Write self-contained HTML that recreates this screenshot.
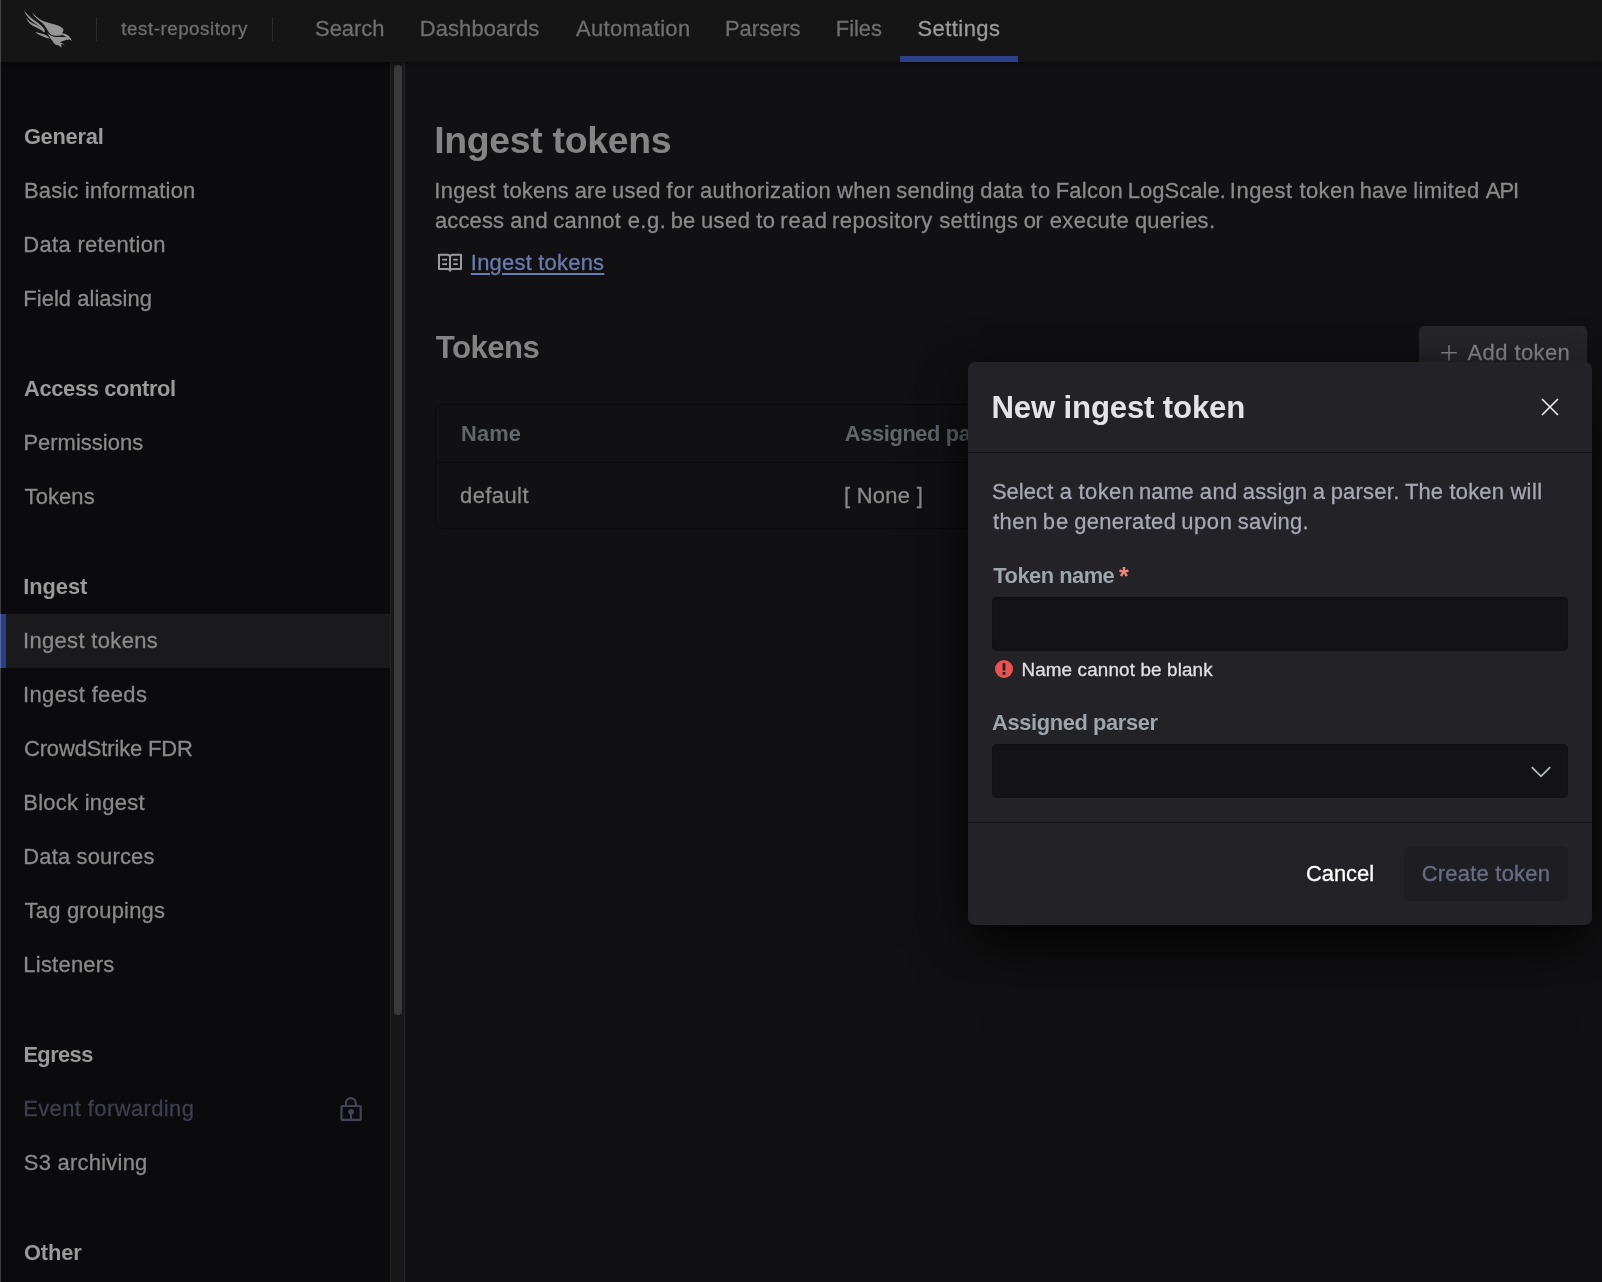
<!DOCTYPE html>
<html lang="en">
<head>
<meta charset="utf-8">
<title>Ingest tokens - test-repository</title>
<style>
html,body{margin:0;padding:0;background:#111113;}
body{width:1602px;height:1282px;overflow:hidden;font-family:"Liberation Sans",Arial,sans-serif;}
#app{position:relative;width:1602px;height:1282px;overflow:hidden;background:#111113;}
.t{position:absolute;white-space:nowrap;line-height:1;-webkit-text-stroke:0.3px currentColor;}
.t.b{-webkit-text-stroke:0;}
#app{will-change:transform;}
.abs{position:absolute;}
a{color:inherit;}
</style>
</head>
<body>
<div id="app">

<!-- sidebar -->
<aside>
  <div class="abs" style="left:0;top:62px;width:390px;height:1220px;background:#0b0b0d;"></div>
  <div class="abs" style="left:0;top:613.5px;width:390px;height:54px;background:#1a1a1c;"></div>
  <div class="abs" style="left:0;top:613.5px;width:6px;height:54px;background:#2b3f86;"></div>
  <nav>
    <span id="s0" class="t b" style="left:23.90px;top:125.51px;font-size:21.84px;font-weight:700;color:#9a9a9a;letter-spacing:-0.245px;">General</span><span id="s1" class="t" style="left:23.95px;top:180.24px;font-size:21.95px;font-weight:400;color:#8a8a8a;letter-spacing:0.192px;">Basic information</span><span id="s2" class="t" style="left:23.33px;top:234.24px;font-size:21.95px;font-weight:400;color:#8a8a8a;letter-spacing:0.326px;">Data retention</span><span id="s3" class="t" style="left:23.33px;top:288.24px;font-size:21.95px;font-weight:400;color:#8a8a8a;letter-spacing:0.044px;">Field aliasing</span>
    <span id="s4" class="t b" style="left:24.09px;top:377.51px;font-size:21.84px;font-weight:700;color:#9a9a9a;letter-spacing:-0.345px;">Access control</span><span id="s5" class="t" style="left:23.40px;top:432.25px;font-size:21.95px;font-weight:400;color:#8a8a8a;letter-spacing:0.032px;">Permissions</span><span id="s6" class="t" style="left:24.60px;top:486.25px;font-size:21.95px;font-weight:400;color:#8a8a8a;letter-spacing:0.105px;">Tokens</span>
    <span id="s7" class="t b" style="left:23.37px;top:575.51px;font-size:21.84px;font-weight:700;color:#9a9a9a;letter-spacing:-0.083px;">Ingest</span><span id="s8" class="t" style="left:23.00px;top:630.24px;font-size:21.95px;font-weight:400;color:#8a8a8a;letter-spacing:0.354px;">Ingest tokens</span><span id="s9" class="t" style="left:23.01px;top:684.24px;font-size:21.95px;font-weight:400;color:#8a8a8a;letter-spacing:0.396px;">Ingest feeds</span><span id="s10" class="t" style="left:23.95px;top:738.24px;font-size:21.95px;font-weight:400;color:#8a8a8a;letter-spacing:-0.123px;">CrowdStrike FDR</span><span id="s11" class="t" style="left:23.30px;top:792.24px;font-size:21.95px;font-weight:400;color:#8a8a8a;letter-spacing:0.268px;">Block ingest</span><span id="s12" class="t" style="left:23.33px;top:846.24px;font-size:21.95px;font-weight:400;color:#8a8a8a;letter-spacing:0.170px;">Data sources</span><span id="s13" class="t" style="left:24.58px;top:900.25px;font-size:21.95px;font-weight:400;color:#8a8a8a;letter-spacing:0.213px;">Tag groupings</span><span id="s14" class="t" style="left:23.33px;top:954.24px;font-size:21.95px;font-weight:400;color:#8a8a8a;letter-spacing:0.248px;">Listeners</span>
    <span id="s15" class="t b" style="left:23.40px;top:1043.51px;font-size:21.84px;font-weight:700;color:#9a9a9a;letter-spacing:-0.576px;">Egress</span><span id="s16" class="t" style="left:23.14px;top:1098.28px;font-size:21.95px;font-weight:400;color:#3e3e4d;letter-spacing:0.413px;">Event forwarding</span><span id="s17" class="t" style="left:23.81px;top:1152.25px;font-size:21.95px;font-weight:400;color:#8a8a8a;letter-spacing:0.252px;">S3 archiving</span>
    <span id="s18" class="t b" style="left:23.90px;top:1241.51px;font-size:21.84px;font-weight:700;color:#9a9a9a;letter-spacing:-0.094px;">Other</span>
  </nav>
  <svg class="abs" style="left:338px;top:1094px;" width="26" height="30" viewBox="338 1094 26 30" fill="none" stroke="#434458" stroke-width="2.2" stroke-linejoin="round">
    <rect x="341.5" y="1106" width="19.2" height="13.9" rx="0.8"/>
    <path d="M346 1106v-3a4.900 4.900 0 0 1 9.800 0v3"/>
    <circle cx="351.100" cy="1111.800" r="2.900" fill="#434458" stroke="none"/>
    <path d="M351.100 1112v7.500" stroke-width="2"/>
  </svg>
  <!-- scrollbar -->
  <div class="abs" style="left:390px;top:62px;width:15px;height:1220px;background:#181818;box-sizing:border-box;border-left:1px solid #222;border-right:1px solid #262626;"></div>
  <div class="abs" style="left:394px;top:65px;width:8px;height:950px;border-radius:4px;background:#3a3a3a;"></div>
</aside>

<!-- main -->
<main>
  <h1 style="margin:0;font-size:inherit;"><span id="h1" class="t b" style="left:434.14px;top:122.31px;font-size:37.44px;font-weight:700;color:#848484;letter-spacing:-0.312px;">Ingest tokens</span></h1>
  <p style="margin:0;"><span id="p1_0" class="t" style="left:434.33px;top:180.24px;font-size:21.95px;font-weight:400;color:#8a8a8a;letter-spacing:0.286px;white-space:pre;">Ingest</span> <span id="p1_1" class="t" style="left:503.09px;top:180.24px;font-size:21.95px;font-weight:400;color:#8a8a8a;letter-spacing:0.223px;white-space:pre;">tokens</span> <span id="p1_2" class="t" style="left:574.65px;top:180.25px;font-size:21.95px;font-weight:400;color:#8a8a8a;letter-spacing:0.208px;white-space:pre;">are</span> <span id="p1_3" class="t" style="left:612.12px;top:180.24px;font-size:21.95px;font-weight:400;color:#8a8a8a;letter-spacing:0.245px;white-space:pre;">used</span> <span id="p1_4" class="t" style="left:666.61px;top:180.25px;font-size:21.95px;font-weight:400;color:#8a8a8a;letter-spacing:0.738px;white-space:pre;">for</span> <span id="p1_5" class="t" style="left:699.97px;top:180.24px;font-size:21.95px;font-weight:400;color:#8a8a8a;letter-spacing:0.431px;white-space:pre;">authorization</span> <span id="p1_6" class="t" style="left:837.03px;top:180.24px;font-size:21.95px;font-weight:400;color:#8a8a8a;letter-spacing:0.374px;white-space:pre;">when</span> <span id="p1_7" class="t" style="left:896.20px;top:180.24px;font-size:21.95px;font-weight:400;color:#8a8a8a;letter-spacing:0.250px;white-space:pre;">sending</span> <span id="p1_8" class="t" style="left:980.13px;top:180.24px;font-size:21.95px;font-weight:400;color:#8a8a8a;letter-spacing:0.160px;white-space:pre;">data</span> <span id="p1_9" class="t" style="left:1030.84px;top:180.25px;font-size:21.95px;font-weight:400;color:#8a8a8a;letter-spacing:1.091px;white-space:pre;">to</span> <span id="p1_10" class="t" style="left:1055.68px;top:180.25px;font-size:21.95px;font-weight:400;color:#8a8a8a;letter-spacing:0.256px;white-space:pre;">Falcon</span> <span id="p1_11" class="t" style="left:1127.68px;top:180.25px;font-size:21.95px;font-weight:400;color:#8a8a8a;letter-spacing:0.065px;white-space:pre;">LogScale.</span> <span id="p1_12" class="t" style="left:1229.87px;top:180.25px;font-size:21.95px;font-weight:400;color:#8a8a8a;letter-spacing:0.503px;white-space:pre;">Ingest</span> <span id="p1_13" class="t" style="left:1299.52px;top:180.25px;font-size:21.95px;font-weight:400;color:#8a8a8a;letter-spacing:0.368px;white-space:pre;">token</span> <span id="p1_14" class="t" style="left:1359.70px;top:180.25px;font-size:21.95px;font-weight:400;color:#8a8a8a;letter-spacing:0.096px;white-space:pre;">have</span> <span id="p1_15" class="t" style="left:1413.17px;top:180.24px;font-size:21.95px;font-weight:400;color:#8a8a8a;letter-spacing:0.422px;white-space:pre;">limited</span> <span id="p1_16" class="t" style="left:1485.65px;top:180.25px;font-size:21.95px;font-weight:400;color:#8a8a8a;letter-spacing:-0.896px;white-space:pre;">API</span><span id="p2_0" class="t" style="left:434.97px;top:210.24px;font-size:21.95px;font-weight:400;color:#8a8a8a;letter-spacing:0.151px;white-space:pre;">access</span> <span id="p2_1" class="t" style="left:510.32px;top:210.24px;font-size:21.95px;font-weight:400;color:#8a8a8a;letter-spacing:0.340px;white-space:pre;">and</span> <span id="p2_2" class="t" style="left:553.31px;top:210.24px;font-size:21.95px;font-weight:400;color:#8a8a8a;letter-spacing:0.346px;white-space:pre;">cannot</span> <span id="p2_3" class="t" style="left:627.63px;top:210.25px;font-size:21.95px;font-weight:400;color:#8a8a8a;letter-spacing:0.537px;white-space:pre;">e.g.</span> <span id="p2_4" class="t" style="left:670.64px;top:210.25px;font-size:21.95px;font-weight:400;color:#8a8a8a;letter-spacing:0.214px;white-space:pre;">be</span> <span id="p2_5" class="t" style="left:700.89px;top:210.24px;font-size:21.95px;font-weight:400;color:#8a8a8a;letter-spacing:0.482px;white-space:pre;">used</span> <span id="p2_6" class="t" style="left:756.28px;top:210.24px;font-size:21.95px;font-weight:400;color:#8a8a8a;letter-spacing:0.361px;white-space:pre;">to</span> <span id="p2_7" class="t" style="left:780.32px;top:210.24px;font-size:21.95px;font-weight:400;color:#8a8a8a;letter-spacing:0.874px;white-space:pre;">read</span> <span id="p2_8" class="t" style="left:832.06px;top:210.24px;font-size:21.95px;font-weight:400;color:#8a8a8a;letter-spacing:0.416px;white-space:pre;">repository</span> <span id="p2_9" class="t" style="left:939.21px;top:210.24px;font-size:21.95px;font-weight:400;color:#8a8a8a;letter-spacing:0.450px;white-space:pre;">settings</span> <span id="p2_10" class="t" style="left:1023.80px;top:210.25px;font-size:21.95px;font-weight:400;color:#8a8a8a;letter-spacing:-0.433px;white-space:pre;">or</span> <span id="p2_11" class="t" style="left:1049.77px;top:210.25px;font-size:21.95px;font-weight:400;color:#8a8a8a;letter-spacing:0.359px;white-space:pre;">execute</span> <span id="p2_12" class="t" style="left:1134.89px;top:210.24px;font-size:21.95px;font-weight:400;color:#8a8a8a;letter-spacing:0.294px;white-space:pre;">queries.</span></p>
  <svg class="abs" style="left:436px;top:252px;" width="28" height="22" viewBox="436 252 28 22" fill="none" stroke="#9c9c9c" stroke-width="2" stroke-linejoin="round">
    <path d="M439 254.800h8.200c1.500 0 2.800 0.900 2.800 2.200c0-1.300 1.300-2.200 2.800-2.200h8.200v14.200h-8.200c-1.500 0-2.800 0.600-2.800 1.800c0-1.200-1.300-1.800-2.800-1.800h-8.200z"/>
    <path d="M450 257v13.500"/>
    <path d="M442.200 259.700h4.800M442.200 264.200h4.800M453.200 259.700h4.600M453.200 264.200h4.600" stroke-width="1.800" stroke-linejoin="miter"/>
  </svg>
  <a><span id="lnk" class="t" style="left:470.84px;top:252.25px;font-size:21.95px;font-weight:400;color:#6c7ab0;letter-spacing:0.228px;text-decoration:underline;text-underline-offset:2.5px;text-decoration-thickness:2px;">Ingest tokens</span></a>
  <h2 style="margin:0;font-size:inherit;"><span id="h2" class="t b" style="left:435.85px;top:331.59px;font-size:31.20px;font-weight:700;color:#848484;letter-spacing:-0.559px;">Tokens</span></h2>
  <div class="abs" style="left:1419px;top:326px;width:168px;height:54px;border-radius:5px;background:#27272c;"></div>
  <svg class="abs" style="left:1440px;top:344px;" width="18" height="18" viewBox="1440 344 18 18" fill="none" stroke="#8c8c8c" stroke-width="1.5"><path d="M1449 345.2v15.300M1441.200 352.800h15.600"/></svg>
  <span id="add" class="t" style="left:1467.54px;top:342.42px;font-size:21.95px;font-weight:400;color:#8c8c8c;letter-spacing:0.434px;">Add token</span>
  <div class="abs" style="left:435px;top:404px;width:1152px;height:125px;box-sizing:border-box;border:1px solid #0a0a0c;border-radius:7px;"></div>
  <div class="abs" style="left:436px;top:462px;width:1150px;height:1px;background:#0a0a0c;"></div>
  <span id="th1" class="t b" style="left:461.11px;top:422.51px;font-size:21.84px;font-weight:700;color:#62666a;letter-spacing:0.099px;">Name</span><span id="th2" class="t b" style="left:844.80px;top:422.51px;font-size:21.84px;font-weight:700;color:#62666a;letter-spacing:-0.370px;">Assigned parser</span><span id="td1" class="t" style="left:460.07px;top:485.24px;font-size:21.95px;font-weight:400;color:#8a8a8a;letter-spacing:0.430px;">default</span><span id="td2" class="t" style="left:843.96px;top:485.24px;font-size:21.95px;font-weight:400;color:#8a8a8a;letter-spacing:0.281px;">[ None ]</span>
</main>

<!-- header -->
<header>
  <div class="abs" style="left:0;top:0;width:1602px;height:62px;background:#151515;box-shadow:0 1px 4px rgba(0,0,0,.6);"></div>
  <svg class="abs" style="left:20px;top:5px;" width="60" height="48" viewBox="20 5 60 48" fill="#969696">
    <path d="M23.9 10.2C27 14.5 31 18 35 20.8C39 23.6 42.5 26 44.9 30.3L43.9 31C41.2 27.3 37.7 25.1 33.8 22.5C29.7 19.6 26.2 15.9 23.9 10.2Z"/>
    <path d="M26 17.7C28.5 21 32 23 36.5 25C40 26.7 43 28.4 45 31.6L44 32.4C41.8 29.9 38.8 28.7 35.3 27C31.2 25 27.7 22.4 26 17.7Z"/>
    <path d="M32 12.3C34.5 15.5 38 18.6 42.5 20.7C47 22.6 53 23.6 58 25.5C61 26.7 63 28 63.4 29.5C63.6 30.8 62.8 32 62.3 33.2L62.3 34.9C59 35.7 56 36.1 53.7 35.6C51 35 49 32.6 47.7 30.4C46.200 27.2 44 24.2 41 21.9C37.500 19.4 34.4 17 32 12.3Z"/>
    <path d="M62.3 33C64 33.5 65.8 34 67 34.7C68.6 35.6 69.6 36.8 70.4 38C71 39 71.6 40 71.9 41.1C70.8 40.2 70 39.600 68.9 39.200L68.300 39.900C67.600 39.600 67 39.600 66.400 39.800C64 40.600 61.600 41.600 59.800 42.400C61.800 42.600 63.800 43.600 64.800 45.600C63.600 44.600 62.400 44.100 61 44.100C61.600 45.200 61.700 46.400 61.300 47.700C60.600 46.600 59.800 45.800 58.800 45.400C57.400 45.200 56 44.800 55.400 44.500C53.600 42.800 52.200 40.400 50.600 38.400C49.400 36.800 48.200 34.800 47.200 32.600C49 34.6 51.4 36.3 54 36.8C58 37.3 62 36.7 66.6 37.3C65.400 36.200 63.800 35.400 62.300 34.900Z"/>
    <path d="M35 32.100C38 32.600 41 33.300 44 34.200C46.400 35 48.400 36.400 49.800 38.500C46 37.800 42 36.200 38.600 34.400C37.200 33.700 36 33 35 32.100Z"/>
  </svg>
  <div class="abs" style="left:96px;top:17px;width:1px;height:24px;background:#2c2c2c;"></div>
  <div class="abs" style="left:272px;top:17px;width:1px;height:24px;background:#2c2c2c;"></div>
  <span id="repo" class="t" style="left:121.34px;top:19.91px;font-size:18.81px;font-weight:400;color:#6e6e6e;letter-spacing:0.506px;">test-repository</span>
  <nav><span id="n1" class="t" style="left:315.09px;top:18.25px;font-size:21.95px;font-weight:400;color:#6e6e6e;letter-spacing:-0.042px;">Search</span><span id="n2" class="t" style="left:419.65px;top:18.25px;font-size:21.95px;font-weight:400;color:#6e6e6e;letter-spacing:0.142px;">Dashboards</span><span id="n3" class="t" style="left:575.93px;top:18.25px;font-size:21.95px;font-weight:400;color:#6e6e6e;letter-spacing:0.360px;">Automation</span><span id="n4" class="t" style="left:724.92px;top:18.25px;font-size:21.95px;font-weight:400;color:#6e6e6e;letter-spacing:0.009px;">Parsers</span><span id="n5" class="t" style="left:835.87px;top:18.25px;font-size:21.95px;font-weight:400;color:#6e6e6e;letter-spacing:-0.048px;">Files</span><span id="n6" class="t" style="left:917.49px;top:18.24px;font-size:21.95px;font-weight:400;color:#9b9b9b;letter-spacing:0.454px;">Settings</span></nav>
  <div class="abs" style="left:900px;top:56px;width:118px;height:6px;background:#2a3f87;"></div>
</header>
<div class="abs" style="left:0;top:0;width:1px;height:1282px;background:rgba(255,255,255,.21);"></div>

<!-- modal -->
<div role="dialog">
  <div class="abs" style="left:968px;top:362px;width:624px;height:563px;border-radius:7px;background:#222227;box-shadow:0 34px 56px -10px rgba(0,0,0,.68),0 6px 46px 4px rgba(0,0,0,.42);"></div>
  <h2 style="margin:0;font-size:inherit;"><span id="mt" class="t b" style="left:991.49px;top:391.59px;font-size:31.20px;font-weight:700;color:#e4e4e7;letter-spacing:-0.180px;">New ingest token</span></h2>
  <svg class="abs" style="left:1540px;top:397px;" width="20" height="20" viewBox="0 0 20 20" fill="none" stroke="#f4f4f6" stroke-width="1.6"><path d="M2 2l16 16M18 2L2 18"/></svg>
  <div class="abs" style="left:968px;top:452px;width:624px;height:1px;background:#111113;"></div>
  <p style="margin:0;"><span id="mb1_0" class="t" style="left:991.89px;top:481.23px;font-size:21.95px;font-weight:400;color:#a8a8b3;letter-spacing:0.078px;white-space:pre;">Select</span> <span id="mb1_1" class="t" style="left:1059.83px;top:481.23px;font-size:21.95px;font-weight:400;color:#a8a8b3;letter-spacing:0.210px;white-space:pre;">a</span> <span id="mb1_2" class="t" style="left:1078.59px;top:481.23px;font-size:21.95px;font-weight:400;color:#a8a8b3;letter-spacing:0.411px;white-space:pre;">token</span> <span id="mb1_3" class="t" style="left:1139.07px;top:481.23px;font-size:21.95px;font-weight:400;color:#a8a8b3;letter-spacing:-0.042px;white-space:pre;">name</span> <span id="mb1_4" class="t" style="left:1199.87px;top:481.23px;font-size:21.95px;font-weight:400;color:#a8a8b3;letter-spacing:0.345px;white-space:pre;">and</span> <span id="mb1_5" class="t" style="left:1242.87px;top:481.23px;font-size:21.95px;font-weight:400;color:#a8a8b3;letter-spacing:0.153px;white-space:pre;">assign</span> <span id="mb1_6" class="t" style="left:1312.87px;top:481.23px;font-size:21.95px;font-weight:400;color:#a8a8b3;letter-spacing:0.210px;white-space:pre;">a</span> <span id="mb1_7" class="t" style="left:1330.67px;top:481.23px;font-size:21.95px;font-weight:400;color:#a8a8b3;letter-spacing:0.252px;white-space:pre;">parser.</span> <span id="mb1_8" class="t" style="left:1404.97px;top:481.23px;font-size:21.95px;font-weight:400;color:#a8a8b3;letter-spacing:0.120px;white-space:pre;">The</span> <span id="mb1_9" class="t" style="left:1449.52px;top:481.23px;font-size:21.95px;font-weight:400;color:#a8a8b3;letter-spacing:0.182px;white-space:pre;">token</span> <span id="mb1_10" class="t" style="left:1510.40px;top:481.23px;font-size:21.95px;font-weight:400;color:#a8a8b3;letter-spacing:0.390px;white-space:pre;">will</span><span id="mb2_0" class="t" style="left:992.88px;top:511.23px;font-size:21.95px;font-weight:400;color:#a8a8b3;letter-spacing:0.598px;white-space:pre;">then</span> <span id="mb2_1" class="t" style="left:1042.67px;top:511.23px;font-size:21.95px;font-weight:400;color:#a8a8b3;letter-spacing:1.148px;white-space:pre;">be</span> <span id="mb2_2" class="t" style="left:1074.13px;top:511.23px;font-size:21.95px;font-weight:400;color:#a8a8b3;letter-spacing:0.367px;white-space:pre;">generated</span> <span id="mb2_3" class="t" style="left:1181.26px;top:511.23px;font-size:21.95px;font-weight:400;color:#a8a8b3;letter-spacing:0.608px;white-space:pre;">upon</span> <span id="mb2_4" class="t" style="left:1237.85px;top:511.23px;font-size:21.95px;font-weight:400;color:#a8a8b3;letter-spacing:0.192px;white-space:pre;">saving.</span></p>
  <label><span id="l1" class="t b" style="left:993.33px;top:564.51px;font-size:21.84px;font-weight:700;color:#a0a5ab;letter-spacing:-0.486px;">Token name</span><span id="ast" class="t b" style="left:1118.88px;top:563.63px;font-size:25.24px;font-weight:700;color:#f0877f;letter-spacing:0.000px;">*</span></label>
  <div class="abs" style="left:992px;top:597px;width:576px;height:54px;border-radius:5px;background:#131315;box-shadow:inset 0 1px 2px rgba(0,0,0,.35);"></div>
  <svg class="abs" style="left:995px;top:660px;" width="18" height="18" viewBox="0 0 18 18"><circle cx="9" cy="9" r="9" fill="#e8534f"/><rect x="7.600" y="3.200" width="2.800" height="7.300" fill="#222227"/><rect x="7.600" y="12" width="2.800" height="2.800" fill="#222227"/></svg>
  <span id="err" class="t" style="left:1021.45px;top:660.85px;font-size:18.81px;font-weight:400;color:#e0e0e3;letter-spacing:0.162px;">Name cannot be blank</span>
  <label><span id="l2" class="t b" style="left:992.12px;top:711.51px;font-size:21.84px;font-weight:700;color:#a0a5ab;letter-spacing:-0.370px;">Assigned parser</span></label>
  <div class="abs" style="left:992px;top:744px;width:576px;height:54px;border-radius:5px;background:#131315;box-shadow:inset 0 1px 2px rgba(0,0,0,.35);"></div>
  <svg class="abs" style="left:1529px;top:762px;" width="24" height="18" viewBox="1529 762 24 18" fill="none" stroke="#b8bdc2" stroke-width="1.8"><path d="M1531.800 767.100l9.200 9.200l9.200-9.200"/></svg>
  <div class="abs" style="left:968px;top:822px;width:624px;height:1px;background:#111113;"></div>
  <span id="cancel" class="t" style="left:1305.94px;top:863.20px;font-size:21.95px;font-weight:400;color:#ffffff;letter-spacing:-0.038px;">Cancel</span>
  <div class="abs" style="left:1404px;top:847px;width:164px;height:54px;border-radius:6px;background:#1e1e22;"></div>
  <span id="create" class="t" style="left:1421.76px;top:863.25px;font-size:21.95px;font-weight:400;color:#6a6c85;letter-spacing:0.234px;">Create token</span>
</div>

</div>
</body>
</html>
